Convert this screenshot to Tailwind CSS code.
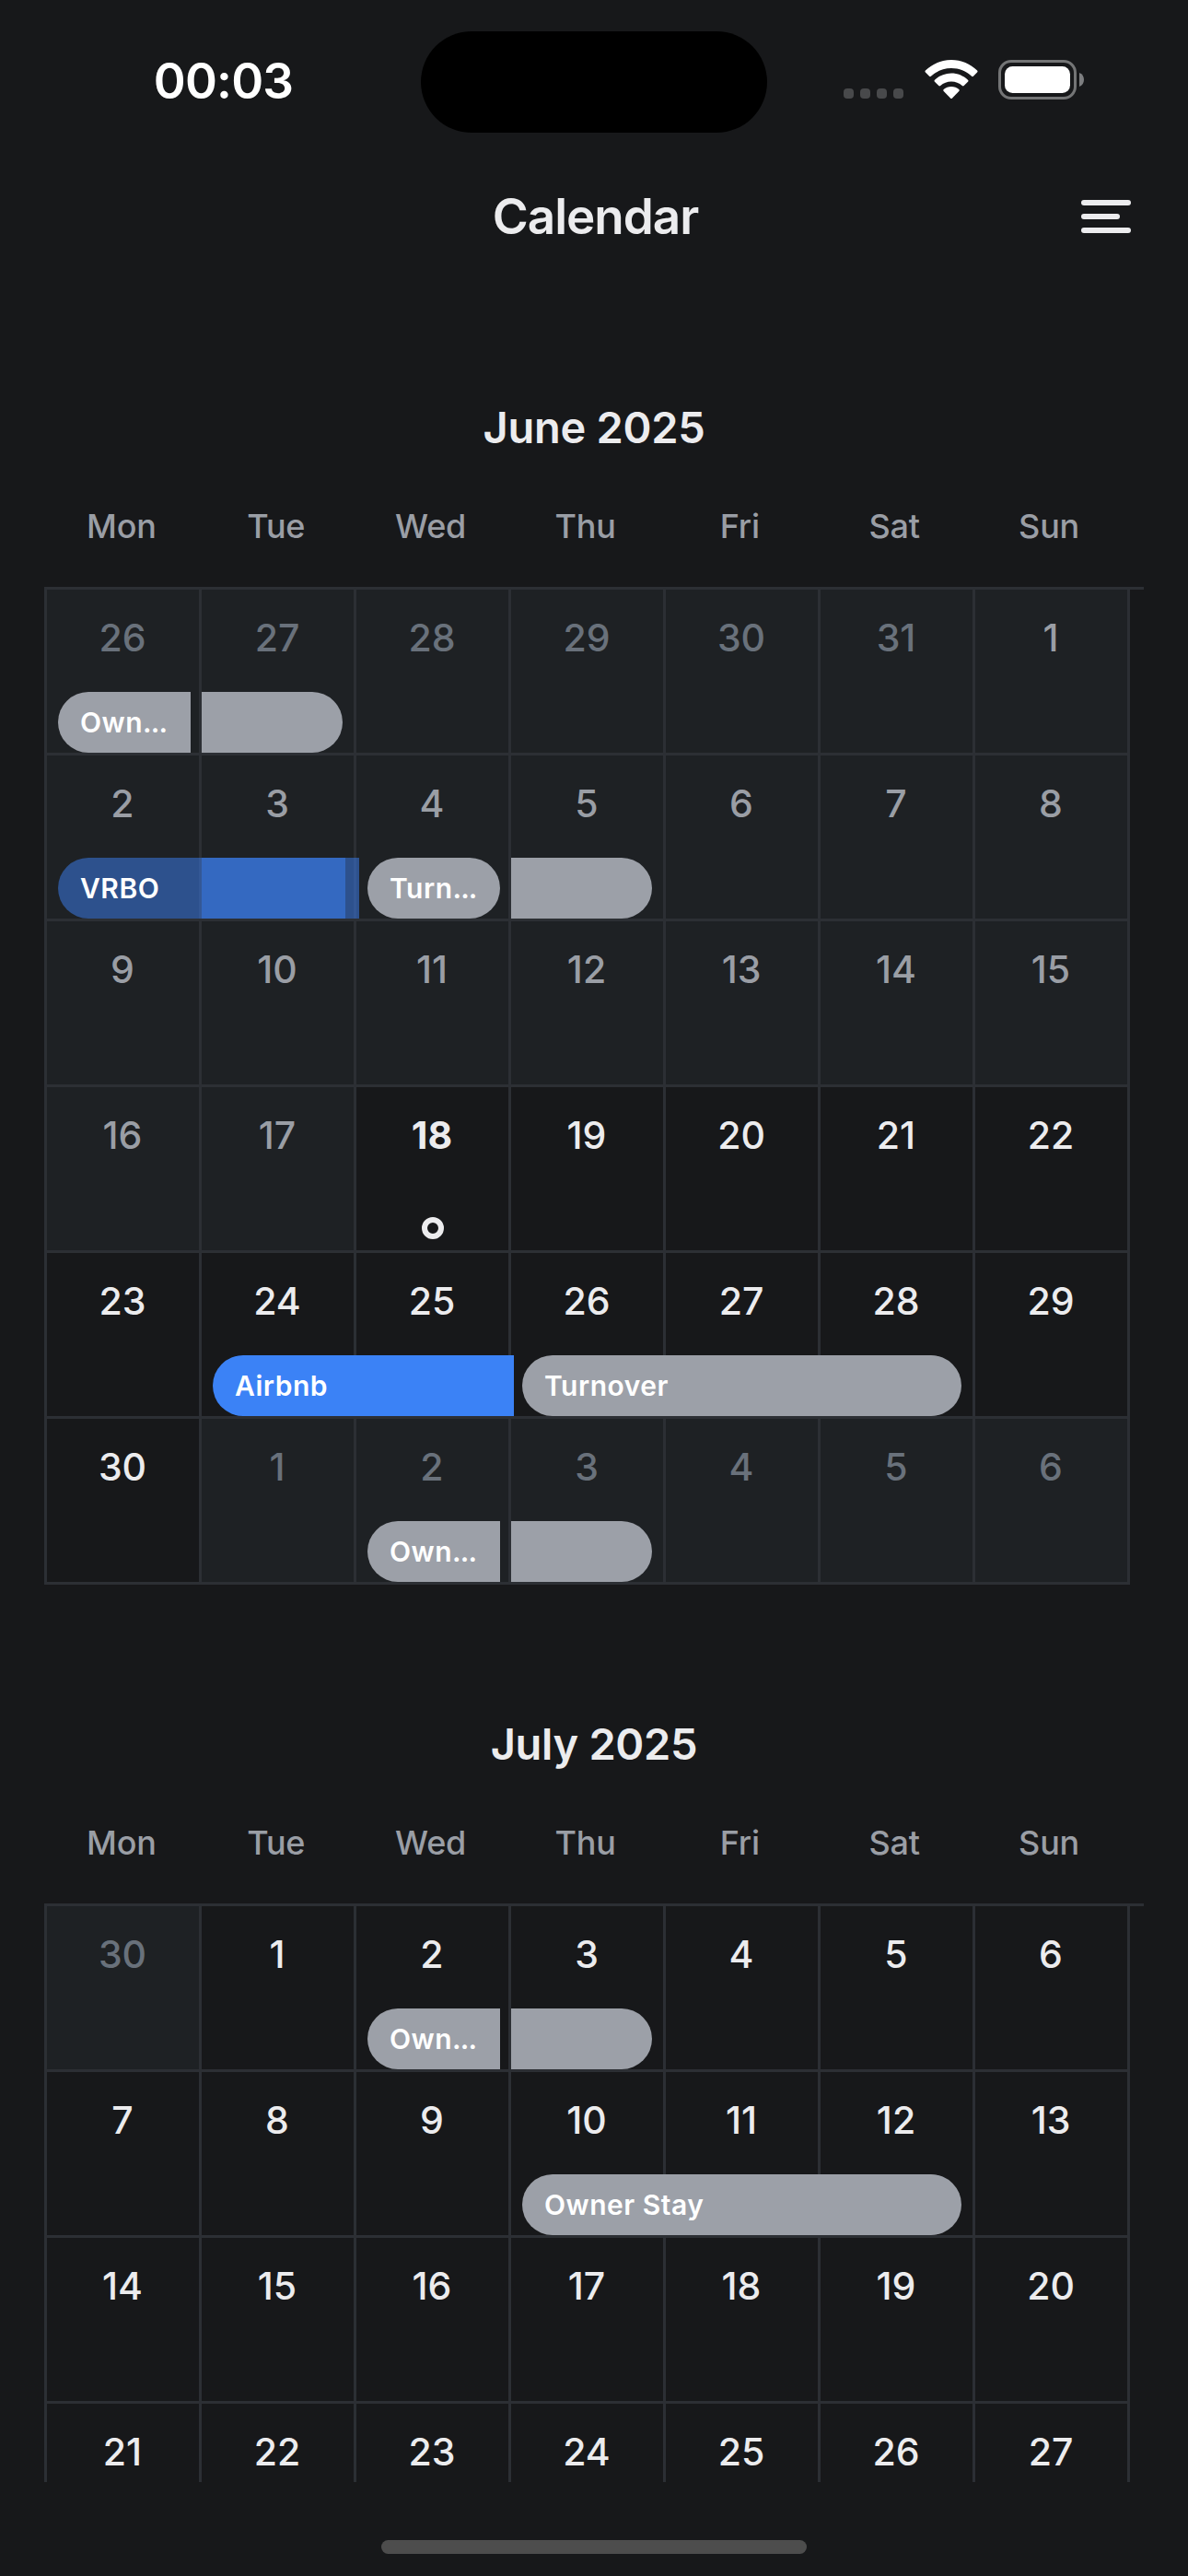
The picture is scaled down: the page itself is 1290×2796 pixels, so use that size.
<!DOCTYPE html>
<html lang="en">
<head>
<meta charset="utf-8">
<title>Calendar</title>
<script src="https://cdn.jsdelivr.net/npm/@tailwindcss/browser@4"></script>
</head>
<body class="bg-[#17181a]">
<div class="relative w-[1290px] h-[2796px] overflow-hidden bg-[#17181a] font-['Inter',sans-serif] text-[#ececee] flex flex-col">
  <header class="h-44 shrink-0 grid grid-cols-[457px_376px_457px] items-center">
    <div class="pl-[28px] text-center text-[53px] font-semibold text-white leading-none tracking-[-0.8px]">00:03</div>
    <div class="h-[110px] rounded-full bg-black mt-px"></div>
    <div class="flex items-center pl-[83px]">
      <div class="flex gap-[7px] mt-[26px] mr-[24px]">
        <i class="size-[11px] rounded-[4px] bg-[#48494b]"></i><i class="size-[11px] rounded-[4px] bg-[#48494b]"></i><i class="size-[11px] rounded-[4px] bg-[#48494b]"></i><i class="size-[11px] rounded-[4px] bg-[#48494b]"></i>
      </div>
      <svg class="-ml-px w-[58px] h-[43px] shrink-0 mt-[-3px]" viewBox="0 0 58 43" fill="#fff">
        <path d="M29 0C39.800 0 49.700 4.200 57.100 11.600Q58 12.500 57.100 13.500L52.900 17.800Q52 18.600 51.100 17.800C45.200 12.300 37.500 9 29 9S12.800 12.300 6.900 17.800Q6 18.600 5.100 17.800L0.900 13.500Q0 12.500 0.900 11.600C8.300 4.200 18.200 0 29 0Z"/>
        <path d="M29 14.600C35.800 14.600 42 17.200 47 21.700Q48 22.700 47 23.700L42.700 28Q41.800 28.800 40.800 28C37.500 25 33.500 23.400 29 23.400S20.500 25 17.200 28Q16.200 28.800 15.300 28L11 23.700Q10 22.700 11 21.700C16 17.200 22.200 14.600 29 14.600Z"/>
        <path d="M29 29C32.200 29 35 30 37.300 31.900Q38.300 32.800 37.300 33.900L30 41.400Q29 42.400 28 41.400L20.700 33.900Q19.700 32.800 20.700 31.900C23 30 25.800 29 29 29Z"/>
      </svg>
      <svg class="ml-[22px] w-[94px] h-[43px] shrink-0 mt-[-3px]" viewBox="0 0 94 43">
        <rect x="1.500" y="1.500" width="82" height="40" rx="12.500" fill="none" stroke="#747576" stroke-width="3"/>
        <rect x="7" y="7" width="71" height="29" rx="8.500" fill="#fff"/>
        <path d="M88 14C91.500 15.500 93 18.300 93 21.500S91.500 27.500 88 29Z" fill="#7d7e80"/>
      </svg>
    </div>
  </header>
  <nav class="h-[118px] shrink-0 grid grid-cols-[1fr_auto_1fr] items-center">
    <span></span>
    <h1 class="text-[53px] font-semibold leading-none tracking-[-1px] pl-[3px]">Calendar</h1>
    <div class="justify-self-end mr-[62px] flex flex-col gap-[9px]">
      <i class="w-[54px] h-[6px] rounded-full bg-[#ececee]"></i>
      <i class="w-[42px] h-[6px] rounded-full bg-[#ececee]"></i>
      <i class="w-[54px] h-[6px] rounded-full bg-[#ececee]"></i>
    </div>
  </nav>
  <main id="months" class="h-[2400px] shrink-0 overflow-hidden pt-[122px] flex flex-col gap-[125px]"></main>
  <div class="mt-[63px] mx-auto w-[462px] h-[15px] shrink-0 rounded-full bg-[#4d4d4d]"></div>
</div>
<script>
// Day states: o = other month, p = past, n = upcoming, t = today
const dayClass = {
  o: 'bg-[#1e2124] text-[#69717b]',
  p: 'bg-[#1e2124] text-[#9a9ea5]',
  n: 'text-[#ececee]',
  t: 'text-[#ececee] font-bold',
};
const gray = 'bg-[#9ca0a8]';
const own = (x, label) => [
  { x, w: 144, c: gray + ' rounded-l-full', label },
  { x: x + 156, w: 153, c: gray + ' rounded-r-full' },
];
const cut = s => `${s}<span class="tracking-[-0.9px]">...</span>`;
const months = [
  { name: 'June 2025', weeks: [
    { days: '26o 27o 28o 29o 30o 31o 1p', bars: own(15, cut('Own')) },
    { days: '2p 3p 4p 5p 6p 7p 8p', bars: [
      { x: 15, w: 327, c: 'bg-[#3b82f6]/50 rounded-l-full', label: 'VRBO' },
      { x: 171, w: 156, c: 'bg-[#3b82f6]/50' },
      { x: 351, w: 144, c: gray + ' rounded-full', label: cut('Turn') },
      { x: 507, w: 153, c: gray + ' rounded-r-full' } ] },
    { days: '9p 10p 11p 12p 13p 14p 15p' },
    { days: '16p 17p 18t 19n 20n 21n 22n' },
    { days: '23n 24n 25n 26n 27n 28n 29n', bars: [
      { x: 183, w: 327, c: 'bg-[#3b82f6] rounded-l-full', label: 'Airbnb' },
      { x: 519, w: 477, c: gray + ' rounded-full', label: 'Turnover' } ] },
    { days: '30n 1o 2o 3o 4o 5o 6o', bars: own(351, cut('Own')) },
  ] },
  { name: 'July 2025', weeks: [
    { days: '30o 1n 2n 3n 4n 5n 6n', bars: own(351, cut('Own')) },
    { days: '7n 8n 9n 10n 11n 12n 13n', bars: [
      { x: 519, w: 477, c: gray + ' rounded-full', label: 'Owner Stay' } ] },
    { days: '14n 15n 16n 17n 18n 19n 20n' },
    { days: '21n 22n 23n 24n 25n 26n 27n' },
  ] },
];
const day = d => {
  const s = d.slice(-1);
  return `<div class="border-r-3 border-b-3 border-[#2c2f34] text-center ${dayClass[s]}">
    <div class="leading-[104px] pr-px">${d.slice(0, -1)}</div>
    ${s === 't' ? '<div class="mx-auto mt-[37px] size-6 rounded-full border-6 border-[#ececee]"></div>' : ''}</div>`;
};
const bar = b => `<div class="absolute top-[111px] h-[66px] pl-6 text-[30px] font-semibold leading-[66px] tracking-[0.5px] text-white whitespace-nowrap ${b.c}" style="left:${b.x}px;width:${b.w}px">${b.label || ''}</div>`;
document.getElementById('months').innerHTML = months.map(m => `
<section class="shrink-0 pl-12">
  <h2 class="w-[1194px] text-center text-[47px] font-semibold leading-[96px] tracking-[-0.3px]">${m.name}</h2>
  <div class="w-[1175px] grid grid-cols-7 text-center text-[36px] font-medium leading-[118px] mb-[7px] tracking-[-0.2px] text-[#9a9ea5]">
    ${['Mon', 'Tue', 'Wed', 'Thu', 'Fri', 'Sat', 'Sun'].map(w => `<span>${w}</span>`).join('')}
  </div>
  <div class="w-[1194px] h-[3px] bg-[#2c2f34]"></div>
  ${m.weeks.map(w => `<div class="relative w-[1179px] h-[180px] grid grid-cols-[repeat(7,168px)] border-l-3 border-[#2c2f34] text-[41px] font-medium">
    ${w.days.split(' ').map(day).join('')}
    ${(w.bars || []).map(b => bar({ ...b, x: b.x - 3 })).join('')}
  </div>`).join('')}
</section>`).join('');
</script>
</body>
</html>
